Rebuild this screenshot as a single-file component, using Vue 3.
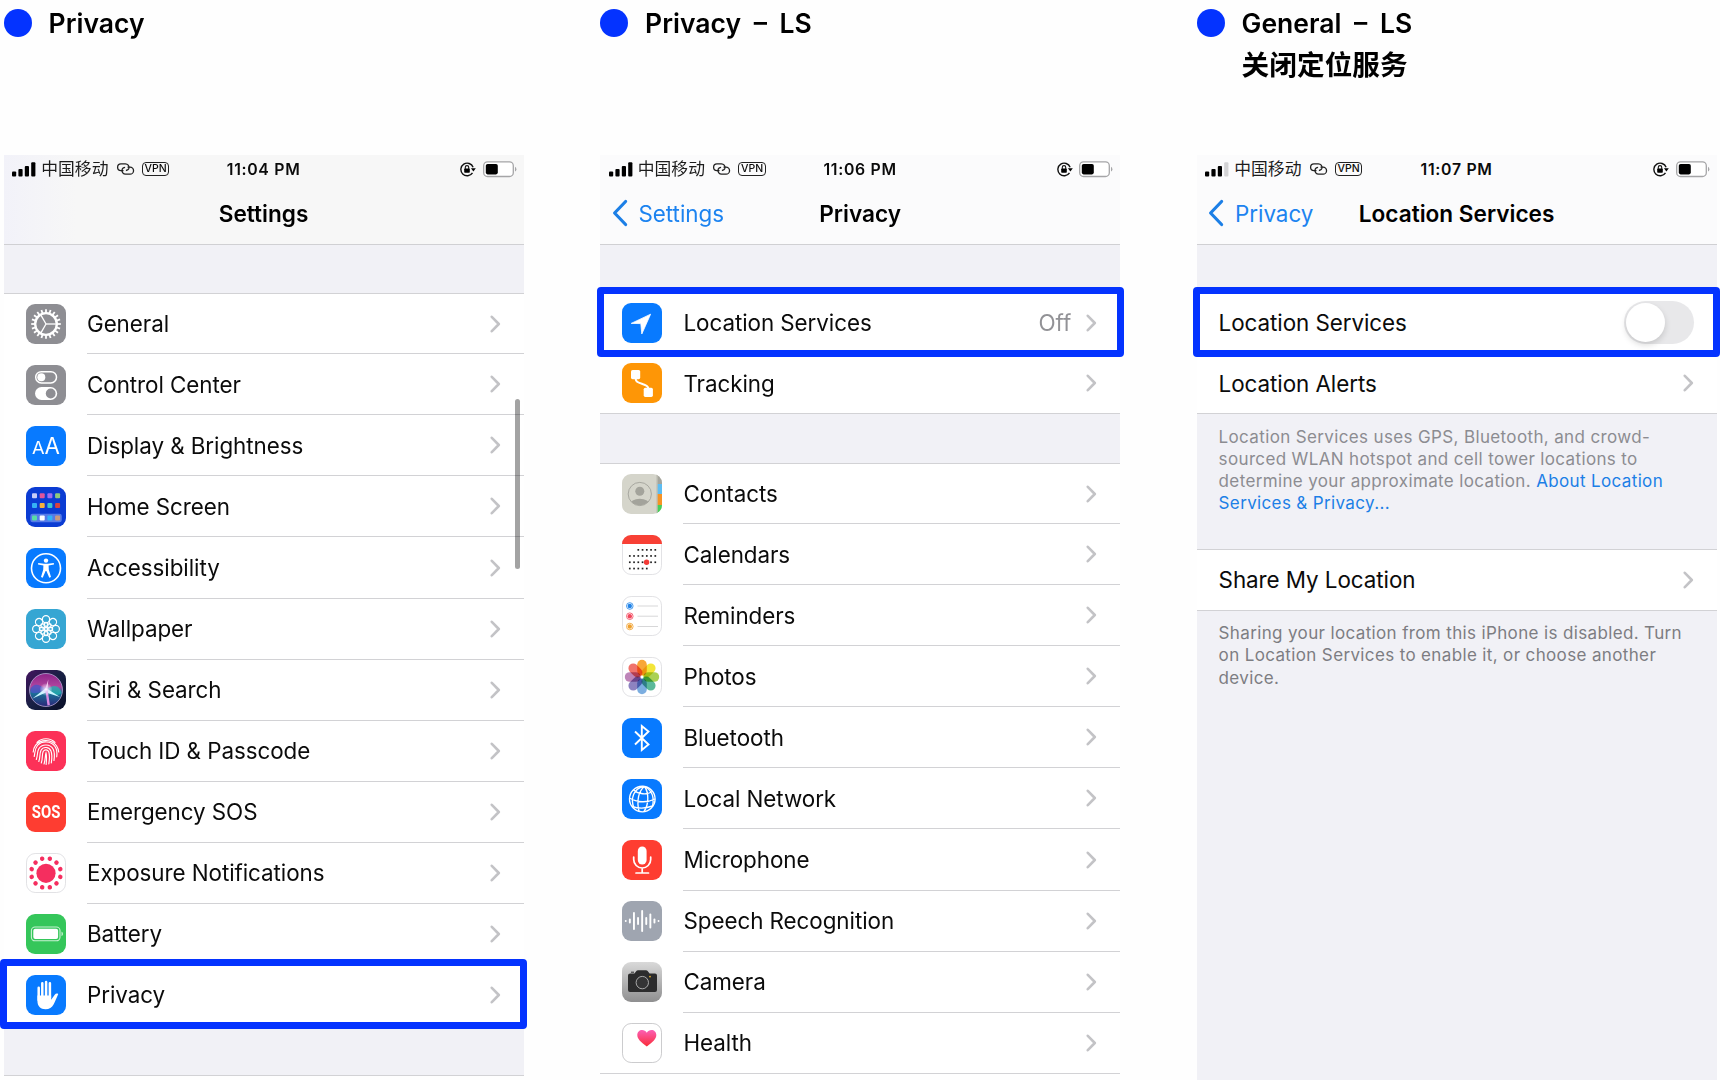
<template>
  <div class="board">
    <section v-for="p in phones" :key="p.heading" class="column">
      <header class="caption">
        <span class="dot"></span>
        <div class="caption-text">
          <div>{{ p.heading }}</div>
          <div v-if="p.sub" class="caption-sub">{{ p.sub }}</div>
        </div>
      </header>

      <div class="phone" :class="{ filled: p.filled }">
        <div class="top" :class="{ tinted: !p.back }">
          <!-- Status bar -->
          <div class="status">
            <svg class="signal" width="24" height="15" viewBox="0 0 24 15">
              <rect x="0" y="9.5" width="4.2" height="5" rx="1" />
              <rect x="6.4" y="7" width="4.2" height="7.5" rx="1" />
              <rect x="12.8" y="4" width="4.2" height="10.5" rx="1" />
              <rect x="19.2" y="0.3" width="4.2" height="14.2" rx="1" :fill="p.weak ? '#d3d3d5' : '#000'" />
            </svg>
            <span class="carrier">中国移动</span>
            <svg class="hotspot" width="19" height="12" viewBox="0 0 19 12">
              <path d="M7.5 7.6H5a3.4 3.4 0 0 1 0-6.8h4.4a3.6 3.6 0 0 1 3.5 4.4c-.4 1.5-1.6 2.3-3 2.3" />
              <path d="M11.5 4.1H14a3.5 3.5 0 0 1 0 7.1H9.7A3.6 3.6 0 0 1 6.1 6.7c.4-1.5 1.6-2.4 3-2.4" />
            </svg>
            <span class="vpn">VPN</span>
            <span class="time">{{ p.time }}</span>
            <svg class="lock" width="16" height="15" viewBox="0 0 16 15">
              <path d="M12.5 10.8a6.3 6.3 0 1 1 .6-5.5" fill="none" stroke="#111" stroke-width="1.4" />
              <path d="M10.9 6.3h4.9l-2.4 3.3z" />
              <rect x="4.2" y="6.6" width="5.6" height="4.2" rx=".7" />
              <path d="M5.3 7V5.3a1.7 1.7 0 0 1 3.4 0V7" fill="none" stroke="#111" stroke-width="1.1" />
            </svg>
            <svg class="battery" width="34" height="17" viewBox="0 0 34 17">
              <rect x=".7" y=".9" width="29.6" height="14.6" rx="3.8" fill="#fff" stroke="#a5a5a7" stroke-width="1.3" />
              <rect x="2.8" y="3" width="12" height="10.4" rx="1.8" />
              <path d="M32 5.8v4.8q1.4-.8 1.4-2.4T32 5.8z" fill="#a5a5a7" />
            </svg>
          </div>

          <!-- Navigation bar -->
          <div class="nav">
            <div v-if="p.back" class="back">
              <svg width="16" height="28" viewBox="0 0 16 28">
                <path d="M13.6 2.5 2.6 14l11 11.5" />
              </svg>
              <span>{{ p.back }}</span>
            </div>
            <div class="title">{{ p.title }}</div>
          </div>
        </div>

        <template v-for="(g, gi) in p.groups" :key="gi">
          <div class="gap" :class="g.gap"></div>
          <div class="group">
            <div v-for="r in g.rows" :key="r.label" class="row" :class="{ marked: r.marked }">
              <svg v-if="r.icon" class="icon" width="40" height="40" viewBox="0 0 40 40" v-html="icons[r.icon]"></svg>
              <div class="row-body">
                <span class="label">{{ r.label }}</span>
                <span v-if="r.value" class="value">{{ r.value }}</span>
                <span v-if="r.toggle" class="toggle"><i></i></span>
                <svg v-else class="chevron" width="11" height="18" viewBox="0 0 11 18">
                  <path d="M1.8 1.8 8.8 9l-7 7.2" />
                </svg>
              </div>
            </div>
          </div>
          <p v-if="g.note" class="note" :class="{ dark: !g.link }">
            <span v-for="(line, i) in g.note" :key="i" class="line">{{ line }}<a v-if="g.link && g.link[i]">{{ g.link[i] }}</a></span>
          </p>
        </template>
        <div v-if="p.tail" class="tail"></div>
        <div v-if="p.scroll" class="scrollbar"></div>
      </div>
    </section>
  </div>
</template>

<script setup>
const bg = (fill) => `<rect width="40" height="40" rx="9" fill="${fill}"/>`
const plate = '<rect x=".5" y=".5" width="39" height="39" rx="8.7" fill="#fff" stroke="#dfdfe2" stroke-width=".9"/>'

// Repeats a shape n times around the icon centre
const ring = (n, fn, start = 0) =>
  Array.from({ length: n }, (_, i) => `<g transform="rotate(${start + (i * 360) / n} 20 20)">${fn(i)}</g>`).join('')

const appColors = ['#c9cdf7', '#e0559b', '#9d6df2', '#8fca7c', '#35b0f5', '#f5b23d', '#3cc5cf', '#d8433f', '#58dca6', '#fff', '#31b4f7', '#c9997f']
const appGrid = appColors
  .map((c, i) => `<rect x="${6 + (i % 4) * 7.7}" y="${[6.2, 16, 28.4][Math.floor(i / 4)]}" width="5" height="5" rx="1" fill="${c}"/>`)
  .join('')

const calendarDots = [[3, 7, 14.8], [1, 7, 20.9], [1, 7, 27.2], [1, 5, 33.5]]
  .map(([from, to, y]) => {
    let out = ''
    for (let i = from; i <= to; i++) out += `<rect x="${2.7 + i * 4.25}" y="${y - 0.8}" width="1.7" height="1.7" fill="#222"/>`
    return out
  })
  .join('')

const petals = ['#f89a1c', '#f2e21d', '#9ecb3c', '#44b08c', '#6aa3dc', '#7d72b8', '#b574b0', '#ee5f57']

const bars = [1.8, 5, 18, 8, 22, 8, 15, 5, 1.8]
  .map((h, i) => `<rect x="${2.8 + i * 4.1}" y="${20 - h / 2}" width="1.9" height="${h}" rx=".9" fill="#fff"/>`)
  .join('')

const icons = {
  general: bg('#8e8e93') +
    `<g fill="none" stroke="#fff"><circle cx="20" cy="20" r="10.8" stroke-width="2.3"/>
    ${ring(20, () => '<path d="M20 9V5.2" stroke-width="1.8"/>')}
    ${ring(3, () => '<path d="M20 20h10.5" stroke-width="1.3"/>')}</g>`,
  control: bg('#8e8e93') +
    `<rect x="9.7" y="6.7" width="20.8" height="11.2" rx="5.6" fill="none" stroke="#fff" stroke-width="1.5"/>
    <circle cx="15.3" cy="12.3" r="4" fill="#fff"/>
    <rect x="9" y="22" width="22.2" height="13" rx="6.5" fill="#fff"/><circle cx="24.7" cy="28.5" r="4.9" fill="#8e8e93"/>`,
  display: bg('#087aff') +
    `<g fill="#fff" font-family="Inter, sans-serif"><text x="5.9" y="28.4" font-size="17.2" textLength="12.6" lengthAdjust="spacingAndGlyphs">A</text>
    <text x="18.4" y="28.4" font-size="22.6" textLength="15.4" lengthAdjust="spacingAndGlyphs">A</text></g>`,
  home: bg('#0b3cd3') + `<rect x="4.3" y="26.7" width="31.5" height="8.6" rx="2.3" fill="#557be8"/>` + appGrid,
  access: bg('#087aff') +
    `<circle cx="20" cy="20.2" r="14.5" fill="none" stroke="#fff" stroke-width="1.6"/>
    <circle cx="20" cy="12.6" r="2.2" fill="#fff"/>
    <path d="M12.2 15 18 15.7h4l5.8-.7.2 1.4-5.4 1.2.2 4.2 2.2 7.3-1.7.6-2.9-6.8h-.8l-2.9 6.8-1.7-.6 2.2-7.3.2-4.2-5.4-1.2z" fill="#fff"/>`,
  wallpaper: bg('#36a6d3') +
    `<g fill="none" stroke="#fff" stroke-width="1.2">${ring(8, () => '<circle cx="20" cy="10.2" r="3.6"/><path d="M20 18.5c-3-2-2.7-3.8 0-5.3 2.7 1.5 3 3.3 0 5.3z"/>')}<circle cx="20" cy="20" r="1.6"/></g>`,
  siri: `<defs><linearGradient id="s1" x1="0" y1="0" x2="1" y2="1"><stop offset="0" stop-color="#42145e"/><stop offset=".5" stop-color="#182044"/><stop offset="1" stop-color="#090f27"/></linearGradient>
    <linearGradient id="s2" x1="0" y1="0" x2="0" y2="1"><stop offset="0" stop-color="#8d2489"/><stop offset=".4" stop-color="#b0459f"/><stop offset=".6" stop-color="#1b6f96"/><stop offset="1" stop-color="#2a2678"/></linearGradient>
    <radialGradient id="s3"><stop offset="0" stop-color="#fff"/><stop offset=".35" stop-color="#e6d9ff" stop-opacity=".7"/><stop offset="1" stop-color="#fff" stop-opacity="0"/></radialGradient></defs>` +
    bg('url(#s1)') +
    `<circle cx="20" cy="20" r="16.5" fill="url(#s2)"/>
    <path d="M20 20C12 12 5 14 4.5 21c1 4 8 2 15.5-1z" fill="#4457c9" opacity=".75"/>
    <path d="M20 20C28 13 34 16 35.5 23c-4 4-9 1-15.5-3z" fill="#20b4b0" opacity=".75"/>
    <path d="M20 18 6.5 28.5 20 22.5 34 27z" fill="#c9f6ff"/>
    <path d="m19.2 19 2.3 16.5 2.4-.5-2.4-16z" fill="#d88ae2"/>
    <path d="M19 20 22.3 9.5 21.5 20z" fill="#f6c4ec"/>
    <circle cx="20" cy="19.5" r="6.5" fill="url(#s3)"/>
    <circle cx="20" cy="20" r="16.5" fill="none" stroke="#b3a5d2" stroke-width=".8"/>`,
  touch: bg('#fc3158') +
    `<g fill="none" stroke="#fff" stroke-width="1.15" stroke-linecap="round">
    <path d="M11 11.3c5-4.8 13-4.8 18 0M7.2 21c.2-2.5.9-4.7 2.3-6.6C14.5 7.8 26 8 30.5 14.8c1.3 2 2 4 2.2 6.2"/>
    <path d="M8.2 25.5c1-4 .3-7.5 3.3-11 4.5-5.1 13.6-4.7 17.5 1 1.8 2.8 2.3 6.3 1.7 10.3"/>
    <path d="M10.3 28.5c1.5-4 .7-7.5 2.4-10.5 3-5.4 11.7-5.3 14.5.2 1.5 3 1.4 7 .8 11.3"/>
    <path d="M12.8 30.5c1.6-4 .6-8 2.2-11.2 2.2-4 8.3-3.6 10 .7 1.2 3.3 1 7.5.3 12"/>
    <path d="M15.3 32c1.7-4 .3-8.5 1.9-11.5 1.4-2.3 4.6-2.1 5.6.5 1 3 .7 7.7 0 12"/>
    <path d="M18 33c1.5-3.8 1-8 2-11 .8 3 .6 7 .1 11.5"/></g>`,
  sos: bg('#fe3d31') + '<text x="5.8" y="26.4" font-family="Roboto, sans-serif" font-weight="700" font-size="18" fill="#fff" textLength="28.6" lengthAdjust="spacingAndGlyphs">SOS</text>',
  exposure: plate + `<circle cx="20" cy="20.3" r="9.6" fill="#f52e5f"/>` + ring(12, () => '<circle cx="20" cy="5.2" r="2.25" fill="#f52e5f"/>', 15),
  battery: bg('#35c65a') +
    `<rect x="5.4" y="13" width="28.6" height="13.8" rx="3.6" fill="none" stroke="#c8f1d2" stroke-width="1.1"/>
    <rect x="7.3" y="14.8" width="24.8" height="10.2" rx="2" fill="#fff"/><path d="M35.5 17.6v4.6q1.5-.8 1.5-2.3t-1.5-2.3z" fill="#c8f1d2"/>`,
  privacy: bg('#087aff') +
    `<g fill="none" stroke="#fff" stroke-linecap="round" stroke-width="2.5"><path d="M12.7 12.8V25M16.3 8.3V22M20.1 7V22M23.9 8.3V23"/></g>
    <path d="M11.45 20.5h13.7v4.3l3.6-5.1c.9-1.2 2.2-1.5 3.5-.8-1.5 3.3-3.2 7.6-4.7 10.6-1.5 3.1-4.3 4.8-8 4.8-5.2 0-8.1-3.1-8.1-8.2z" fill="#fff"/>`,
  location: bg('#087aff') + '<path d="M9.2 20.4 28.6 11.2 19.8 31l-1-10.4z" fill="#fff" stroke="#fff" stroke-linejoin="round" stroke-width=".8"/>',
  tracking: bg('#fe9606') +
    `<rect x="9" y="7" width="9.2" height="9.2" rx="1.6" fill="#fff"/><rect x="21.7" y="24.7" width="9.2" height="9.2" rx="1.6" fill="#fff"/>
    <path d="M13.8 15v1.5c0 5 12.5 3.5 12.5 9" fill="none" stroke="#fff" stroke-width="2"/>`,
  contacts: `<clipPath id="c1"><rect width="40" height="40" rx="9"/></clipPath><g clip-path="url(#c1)">
    <path fill="#d5d5cb" d="M0 0h40v40H0z"/><path fill="#a5a59d" d="M35 0h5v10h-5z"/><path fill="#5dbdf2" d="M35 10h5v10h-5z"/><path fill="#f69325" d="M35 20h5v11h-5z"/><path fill="#47cf58" d="M35 31h5v9h-5z"/><path fill="#c0c0b7" d="M34.3 0h1.4v40h-1.4z"/>
    <clipPath id="c2"><circle cx="17.8" cy="20" r="11.3"/></clipPath>
    <circle cx="17.8" cy="17.2" r="4.5" fill="#a3a39b"/><ellipse cx="17.8" cy="31" rx="10" ry="6.3" fill="#a3a39b" clip-path="url(#c2)"/>
    <circle cx="17.8" cy="20" r="11.6" fill="none" stroke="#a3a39b" stroke-width=".9"/></g>`,
  calendar: plate + `<path d="M0 9a9 9 0 0 1 9-9h22a9 9 0 0 1 9 9z" fill="#f84035"/>` + calendarDots + '<circle cx="24.6" cy="27.2" r="2.7" fill="#f33a36"/>',
  reminders: plate + [['#2083e8', 10], ['#f2455b', 20.2], ['#f0a02c', 30.5]]
    .map(([c, y]) => `<circle cx="7.8" cy="${y}" r="3.3" fill="none" stroke="${c}" stroke-width=".8"/><circle cx="7.8" cy="${y}" r="2.2" fill="${c}"/><path d="M15.5 ${y}H36" stroke="#d2d2d4" stroke-width=".9"/>`)
    .join(''),
  photos: plate + `<g style="isolation:isolate">${ring(8, (i) => `<rect x="15.2" y="2.8" width="9.6" height="15.8" rx="4.8" fill="${petals[i]}" opacity=".88" style="mix-blend-mode:multiply"/>`)}</g>`,
  bluetooth: bg('#087aff') + '<path d="m13 13.5 13.5 13L19.8 32V8l6.7 5.5L13 26.5" fill="none" stroke="#fff" stroke-width="1.9"/>',
  network: bg('#087aff') +
    `<g fill="none" stroke="#fff" stroke-width="1.35"><circle cx="20.3" cy="20" r="12.8"/>
    <path d="M22.5 7.5c-6 4.5-8 14-5.5 25M22.5 7.5c4.5 6 4.5 18-.5 25M21.5 7.5C12 9.5 8 19 12 29.5M23 7.5c7 4 9.5 11 7.5 20M11.5 11c5 4.5 13.5 5 19 1.5M7.5 19c7.5 4.8 18 4.8 25.6 1M10 27.5c6 2 14 2 20.5-.5"/></g>`,
  mic: bg('#fe3d31') +
    `<rect x="15.8" y="6.5" width="8.8" height="18" rx="4.4" fill="#fff"/>
    <path d="M11.7 17v2.5a8.5 8.5 0 0 0 17 0V17M20.2 28v4.5M14 33h12.5" fill="none" stroke="#fff" stroke-width="1.7" stroke-linecap="round"/>`,
  speech: bg('#9fa5b0') + bars,
  camera: `<defs><linearGradient id="k1" x1="0" y1="0" x2="0" y2="1"><stop offset="0" stop-color="#d9d9d9"/><stop offset="1" stop-color="#8f8f90"/></linearGradient></defs>` +
    bg('url(#k1)') +
    `<path d="M8.2 11.4h4.2l2.2-2.6q.5-.6 1.3-.6h8.2q.8 0 1.3.6l2.2 2.6H33a2 2 0 0 1 2 2v14.6a2 2 0 0 1-2 2H8a2 2 0 0 1-2-2V13.4q0-2 2.2-2z" fill="#2c2c2d"/>
    <path d="M9 10.2h3" stroke="#2c2c2d"/><circle cx="20.3" cy="20.6" r="6.2" fill="#343435" stroke="#b5b5b5" stroke-width=".9"/><circle cx="28" cy="14.6" r=".9" fill="#e6b32f"/>`,
  health: `<defs><linearGradient id="h1" x1="0" y1="0" x2="0" y2="1"><stop offset="0" stop-color="#fb5fb5"/><stop offset="1" stop-color="#fa2c37"/></linearGradient></defs>
    <rect x=".5" y=".5" width="39" height="39" rx="8.7" fill="#fff" stroke="#bfbfc2" stroke-width=".8"/>
    <path d="M24.8 23.5C18.5 18.8 15.3 15.8 15.3 12c0-3 2.2-5 4.8-5 2 0 3.6 1 4.7 2.8C25.9 8 27.5 7 29.5 7c2.6 0 4.8 2 4.8 5 0 3.8-3.2 6.8-9.5 11.5z" fill="url(#h1)"/>`,
}

const phones = [
  {
    heading: 'Privacy', time: '11:04 PM', title: 'Settings', scroll: true, tail: true,
    groups: [{
      gap: 'tall',
      rows: [
        { icon: 'general', label: 'General' },
        { icon: 'control', label: 'Control Center' },
        { icon: 'display', label: 'Display & Brightness' },
        { icon: 'home', label: 'Home Screen' },
        { icon: 'access', label: 'Accessibility' },
        { icon: 'wallpaper', label: 'Wallpaper' },
        { icon: 'siri', label: 'Siri & Search' },
        { icon: 'touch', label: 'Touch ID & Passcode' },
        { icon: 'sos', label: 'Emergency SOS' },
        { icon: 'exposure', label: 'Exposure Notifications' },
        { icon: 'battery', label: 'Battery' },
        { icon: 'privacy', label: 'Privacy', marked: true },
      ],
    }],
  },
  {
    heading: 'Privacy – LS', time: '11:06 PM', title: 'Privacy', back: 'Settings',
    groups: [
      {
        rows: [
          { icon: 'location', label: 'Location Services', value: 'Off', marked: true },
          { icon: 'tracking', label: 'Tracking' },
        ],
      },
      {
        gap: 'tall',
        rows: [
          { icon: 'contacts', label: 'Contacts' },
          { icon: 'calendar', label: 'Calendars' },
          { icon: 'reminders', label: 'Reminders' },
          { icon: 'photos', label: 'Photos' },
          { icon: 'bluetooth', label: 'Bluetooth' },
          { icon: 'network', label: 'Local Network' },
          { icon: 'mic', label: 'Microphone' },
          { icon: 'speech', label: 'Speech Recognition' },
          { icon: 'camera', label: 'Camera' },
          { icon: 'health', label: 'Health' },
        ],
      },
    ],
  },
  {
    heading: 'General – LS', sub: '关闭定位服务', time: '11:07 PM', title: 'Location Services', back: 'Privacy', weak: true, filled: true,
    groups: [
      {
        rows: [
          { label: 'Location Services', toggle: true, marked: true },
          { label: 'Location Alerts' },
        ],
        note: [
          'Location Services uses GPS, Bluetooth, and crowd-',
          'sourced WLAN hotspot and cell tower locations to',
          'determine your approximate location. ',
          '',
        ],
        link: { 2: 'About Location', 3: 'Services & Privacy...' },
      },
      {
        gap: 'short',
        rows: [{ label: 'Share My Location' }],
        note: [
          'Sharing your location from this iPhone is disabled. Turn',
          'on Location Services to enable it, or choose another',
          'device.',
        ],
      },
    ],
  },
]
</script>

<style>
body {
  background: #fefefe;
  overflow: hidden;
}
</style>

<style scoped>
.board {
  display: flex;
  gap: 76.5px;
  height: 1080px;
  padding-left: 3.6px;
  box-sizing: border-box;
  overflow: hidden;
  font-family: Inter, "Noto Sans CJK SC", sans-serif;
  color: #0b0b0b;
}
.column {
  width: 520px;
  flex: none;
  display: flex;
  flex-direction: column;
}
.caption {
  height: 155px;
  flex: none;
  display: flex;
  gap: 17px;
  padding-top: 2px;
  box-sizing: border-box;
}
.dot {
  width: 28px;
  height: 28px;
  margin-top: 7px;
  border-radius: 50%;
  background: #0433ff;
}
.caption-text {
  font-size: 26.5px;
  font-weight: 600;
  line-height: 42px;
  letter-spacing: 0;
  word-spacing: 6px;
  color: #000;
}
.caption-sub {
  font-size: 27.6px;
  letter-spacing: 0.1px;
}
.phone {
  flex: 1;
  position: relative;
}
.phone.filled { background: #f1f1f6; }
.top {
  height: 89.5px;
  box-sizing: border-box;
  background: #fbfbfc;
  border-bottom: 1.5px solid #d0d0d3;
}
.top.tinted { background: linear-gradient(90deg, #f2f2f9, #f7f7f7 14%); }
.status {
  height: 28px;
  display: flex;
  align-items: center;
  padding: 0 7px 0 8.7px;
  position: relative;
}
.carrier {
  margin-left: 5px;
  font-size: 16.8px;
  line-height: 28px;
  color: #1c1c1c;
}
.hotspot {
  margin-left: 7.5px;
  fill: none;
  stroke: #222;
  stroke-width: 1.3;
}
.vpn {
  margin-left: 7px;
  width: 25.5px;
  height: 12px;
  border: 1.5px solid #222;
  border-radius: 4px;
  font-size: 10.5px;
  font-weight: 500;
  line-height: 12px;
  text-align: center;
}
.time {
  position: absolute;
  left: 0;
  right: 0;
  text-align: center;
  font-size: 15.8px;
  font-weight: 600;
  letter-spacing: 0.7px;
}
.lock { margin-left: auto; }
.battery { margin-left: 6.5px; }
.nav {
  height: 60px;
  position: relative;
  display: flex;
  align-items: center;
  justify-content: center;
}
.title {
  font-size: 22.6px;
  font-weight: 600;
  letter-spacing: 0;
  color: #000;
}
.back {
  position: absolute;
  left: 11.8px;
  display: flex;
  align-items: center;
  gap: 10.5px;
  font-size: 22.4px;
  letter-spacing: 0;
  color: #1c83f0;
}
.back svg path {
  fill: none;
  stroke: #1c7fe6;
  stroke-width: 3.2;
  stroke-linecap: round;
  stroke-linejoin: round;
}
.gap {
  height: 47.7px;
  background: #f1f1f6;
}
.gap.tall { height: 48.5px; }
.gap.short { height: 34.5px; }
.group {
  background: #fff;
  border-top: 1px solid #d2d2d5;
  border-bottom: 1px solid #d2d2d5;
}
.row {
  height: 61.07px;
  display: flex;
  align-items: center;
  padding-left: 22px;
  position: relative;
}
.row:first-child { height: 60.3px; }
.row:last-child { height: 59.9px; }
.icon {
  margin-right: 21.4px;
  flex: none;
}
.row-body {
  flex: 1;
  height: 100%;
  display: flex;
  align-items: center;
  padding-right: 22.8px;
  border-bottom: 1px solid #d2d2d5;
  box-sizing: border-box;
}
.row:last-child .row-body { border-bottom: 0; }
.label {
  flex: 1;
  font-size: 22.4px;
  letter-spacing: -0.06px;
}
.value {
  margin-right: 15px;
  font-size: 22.4px;
  color: #929296;
}
.chevron path {
  fill: none;
  stroke: #c3c3c6;
  stroke-width: 2.6;
  stroke-linecap: round;
  stroke-linejoin: round;
}
/* annotation frame around the row to tap */
.marked::after {
  content: "";
  position: absolute;
  left: -3.5px;
  right: -3.5px;
  top: -6px;
  height: 56px;
  border: 7px solid #0433ff;
  border-radius: 4px;
  z-index: 1;
}
.toggle {
  width: 70px;
  height: 43px;
  border-radius: 22px;
  background: #e8e8ea;
}
.toggle i {
  display: block;
  width: 39px;
  height: 39px;
  margin: 2px;
  border-radius: 50%;
  background: #fff;
  box-shadow: 0 3px 6px rgba(0, 0, 0, 0.15);
}
.note {
  margin: 0;
  padding: 11.3px 0 0 22px;
  font-size: 17px;
  line-height: 22.2px;
  letter-spacing: 0.36px;
  color: #8c8c91;
}
.note.dark { color: #7d7d82; }
.line {
  display: block;
  white-space: pre;
}
.note a { color: #1c7fe6; }
.tail {
  height: 49px;
  background: #f1f1f6;
  border-bottom: 1px solid #d2d2d5;
}
.scrollbar {
  position: absolute;
  top: 244px;
  right: 4px;
  width: 5px;
  height: 170px;
  border-radius: 3px;
  background: rgba(0, 0, 0, 0.36);
}
</style>
